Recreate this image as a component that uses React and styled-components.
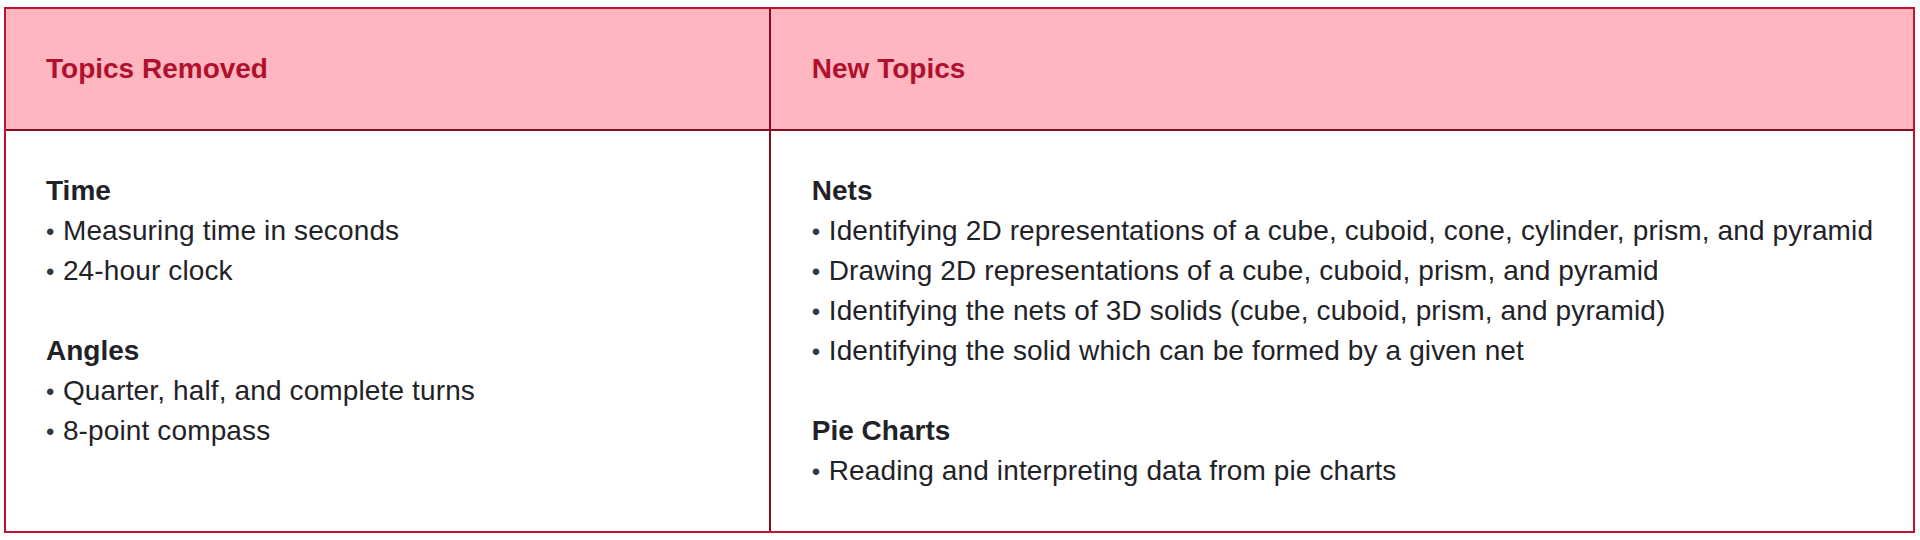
import React from 'react'
import styled, { createGlobalStyle } from 'styled-components'

const GlobalStyle = createGlobalStyle`
  html, body {
    margin: 0;
    padding: 0;
    background: #ffffff;
  }
  body {
    padding: 7px 5px 0 4px;
    font-family: "Liberation Sans", Arial, Helvetica, sans-serif;
  }
`

const columns = [
  {
    title: 'Topics Removed',
    groups: [
      { name: 'Time', items: ['Measuring time in seconds', '24-hour clock'] },
      { name: 'Angles', items: ['Quarter, half, and complete turns', '8-point compass'] },
    ],
  },
  {
    title: 'New Topics',
    groups: [
      {
        name: 'Nets',
        items: [
          'Identifying 2D representations of a cube, cuboid, cone, cylinder, prism, and pyramid',
          'Drawing 2D representations of a cube, cuboid, prism, and pyramid',
          'Identifying the nets of 3D solids (cube, cuboid, prism, and pyramid)',
          'Identifying the solid which can be formed by a given net',
        ],
      },
      { name: 'Pie Charts', items: ['Reading and interpreting data from pie charts'] },
    ],
  },
]

const App = () => {
  return (
    <>
      <GlobalStyle />
      <Table>
        {columns.map((col, i) => (
          <HeaderCell key={col.title} $first={i === 0}>{col.title}</HeaderCell>
        ))}
        {columns.map((col, i) => (
          <BodyCell key={col.title} $first={i === 0}>
            {col.groups.map((g) => (
              <Group key={g.name}>
                <GroupTitle>{g.name}</GroupTitle>
                {g.items.map((item) => (
                  <Item key={item}><Bullet>•</Bullet> {item}</Item>
                ))}
              </Group>
            ))}
          </BodyCell>
        ))}
      </Table>
    </>
  )
}

const Table = styled.div`
  display: grid;
  grid-template-columns: minmax(0, 2fr) minmax(0, 3fr);
  border: 2px solid #c0112f;
  box-sizing: border-box;
  width: 100%;
`

const HeaderCell = styled.div`
  background-color: #ffb6c1;
  color: #b0102d;
  font-weight: 700;
  font-size: 28px;
  line-height: 40px;
  padding: 40px 40px 40px ${(p) => (p.$first ? '40px' : '41px')};
  border-bottom: 2px solid #850a22;
  border-left: ${(p) => (p.$first ? 'none' : '2px solid #850a22')};
`

const BodyCell = styled.div`
  padding: 40px 40px 40px ${(p) => (p.$first ? '40px' : '41px')};
  border-left: ${(p) => (p.$first ? 'none' : '2px solid #850a22')};
  color: #1f2328;
  font-size: 28px;
  line-height: 40px;
`

const Group = styled.div`
  & + & {
    margin-top: 40px;
  }
`

const GroupTitle = styled.div`
  font-weight: 700;
`

const Item = styled.div`
  height: 40px;
  white-space: nowrap;
  letter-spacing: 0.13px;
`

const Bullet = styled.span`
  display: inline-block;
  width: 9px;
  font-size: 24px;
  line-height: 0;
  color: #34393e;
`

export default App
